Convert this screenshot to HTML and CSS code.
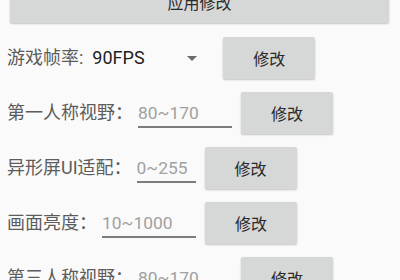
FILE: index.html
```html
<!DOCTYPE html>
<html lang="zh">
<head>
<meta charset="utf-8">
<link rel="stylesheet" href="styles.css">
</head>
<body>
<div class="page">
  <div class="btn apply">应用修改</div>

  <div class="row first">
    <span class="label">游戏帧率:</span>
    <div class="spinner">
      <span class="value">90FPS</span>
      <span class="arrow"></span>
    </div>
    <div class="btn small gap-spin">修改</div>
  </div>

  <div class="row">
    <span class="label">第一人称视野：</span>
    <span class="field wide">80~170</span>
    <div class="btn small">修改</div>
  </div>

  <div class="row">
    <span class="label">异形屏UI适配：</span>
    <span class="field narrow">0~255</span>
    <div class="btn small">修改</div>
  </div>

  <div class="row">
    <span class="label">画面亮度：</span>
    <span class="field wide">10~1000</span>
    <div class="btn small">修改</div>
  </div>

  <div class="row">
    <span class="label">第三人称视野：</span>
    <span class="field wide">80~170</span>
    <div class="btn small">修改</div>
  </div>
</div>
</body>
</html>
```

FILE: styles.css
```css
html, body {
  margin: 0;
  padding: 0;
  background: #fafafa;
  overflow: hidden;
}

body {
  font-family: Roboto, "Noto Sans CJK SC", sans-serif;
  width: 400px;
  height: 280px;
}

.page {
  display: flex;
  flex-direction: column;
}

.btn {
  background: #d6d7d7;
  color: #2a2a2a;
  border-radius: 2px;
  box-shadow: 0 1px 2px rgba(0, 0, 0, 0.22);
  font-size: 16px;
  display: flex;
  align-items: center;
  justify-content: center;
  height: 42px;
  flex: none;
}

.apply {
  margin: -19px 11px 0 10px;
}

.row {
  display: flex;
  align-items: center;
  height: 55px;
  padding-left: 7px;
}

.row.first {
  margin-top: 8px;
  height: 54px;
}

.label {
  font-size: 18px;
  color: #5c5c5c;
  line-height: 22px;
  flex: none;
  white-space: nowrap;
}

.spinner {
  display: flex;
  align-items: center;
  justify-content: space-between;
  width: 105px;
  padding-left: 9px;
  flex: none;
}

.value {
  font-size: 18px;
  color: #1e1e1e;
  line-height: 22px;
}

.arrow {
  width: 0;
  height: 0;
  border-left: 5px solid transparent;
  border-right: 5px solid transparent;
  border-top: 5px solid #6a6a6a;
}

.field {
  font-size: 17.4px;
  color: #a0a0a0;
  line-height: 22px;
  padding-top: 4px;
  padding-bottom: 2px;
  border-bottom: 2px solid #7c7c7c;
  margin-left: 5px;
  flex: none;
  box-sizing: content-box;
}

.field.wide {
  width: 94px;
}

.field.narrow {
  width: 59px;
}

.small {
  width: 92px;
  margin-left: 9px;
}

.small.gap-spin {
  margin-left: 26px;
}
```
